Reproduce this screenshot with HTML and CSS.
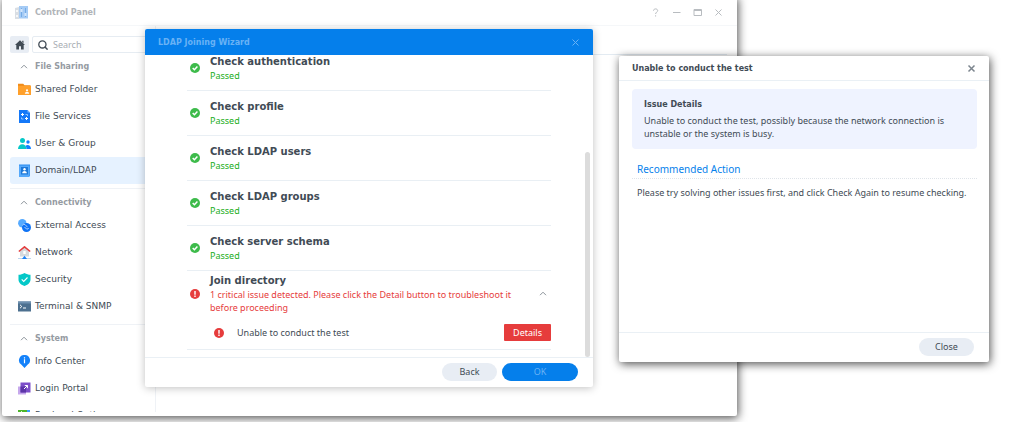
FILE: index.html
```html
<!DOCTYPE html>
<html lang="en">
<head>
    <meta charset="UTF-8">
    <meta name="viewport" content="width=device-width, initial-scale=1.0">
    <title>Control Panel</title>
    <link rel="stylesheet" href="styles.css">
</head>
<body>
    <div class="desktop">
        <section class="window panel">
            <header class="panel-header">
                <svg class="panel-logo" viewBox="0 0 14 14">
                    <path fill="#d9dee4" d="M1 2l4-1v12H1z"/>
                    <path fill="#a5cbf5" d="M5 0h9v12.500H5z"/>
                    <circle cx="3" cy="5" r="1" fill="#fff"/>
                    <circle cx="3" cy="10" r="1" fill="#fff"/>
                    <path stroke="#74abe6" d="M7.500 2v9M11.500 2v9"/>
                    <path fill="#d3e6fb" d="M6.500 3h2v3h-2zM10.500 7h2v3h-2z"/>
                </svg>
                <h1 class="panel-title">Control Panel</h1>
                <div class="panel-tools">
                    <button class="tool" aria-label="Help"><svg viewBox="0 0 9 9"><path d="M2.500 2.700C2.500.300 6.700.300 6.700 2.700 6.700 4 4.600 4.200 4.600 6M4.600 7.300v1.200"/></svg></button>
                    <button class="tool" aria-label="Minimize"><svg viewBox="0 0 9 9"><path d="M1 4.500h7.500"/></svg></button>
                    <button class="tool" aria-label="Maximize"><svg viewBox="0 0 9 9"><path d="M1 1.500h7.500v6H1zM1 2.500h7.500"/></svg></button>
                    <button class="tool" aria-label="Close"><svg viewBox="0 0 9 9"><path d="M1.500 1.500l6 6M7.500 1.500l-6 6"/></svg></button>
                </div>
            </header>
            <div class="panel-body">
                <nav class="sidebar">
                    <div class="search-row">
                        <button class="home" aria-label="Home"><svg viewBox="0 0 10 10"><path fill="#414b55" d="M5 .300L10 5H8.700v4.500H6V6.300H4v3.200H1.300V5H0zM7.200.800h1.300v2.500L7.200 2z"/></svg></button>
                        <label class="search">
                            <svg viewBox="0 0 10 10"><circle cx="4.400" cy="4.400" r="3.600" fill="none" stroke="#414b55" stroke-width="1.300"/><path stroke="#414b55" stroke-width="1.500" d="M7 7l2.600 2.600"/></svg>
                            <input type="text" placeholder="Search" aria-label="Search">
                        </label>
                    </div>
                    <div class="group">
                        <h2 class="group-title"><svg viewBox="0 0 8 5"><path d="M1 4.200l3-3 3 3"/></svg>File Sharing</h2>
                        <a class="item" href="#">
                            <svg viewBox="0 0 13 13"><path fill="#f08c1a" d="M0 .800h5.200l1.300 1.500H12.500V6H0z"/><path fill="#ffa02b" d="M0 2.800h13v9.200H0z"/><circle cx="9" cy="7.300" r="1.100" fill="#fff"/><path fill="#fff" d="M6.800 10.800c0-2.800 4.400-2.800 4.400 0z"/></svg>
                            Shared Folder
                        </a>
                        <a class="item" href="#">
                            <svg viewBox="0 0 13 13"><path fill="#1478f8" d="M1 0h8.500L12 2.500V13H1z"/><path fill="#7db9ff" d="M9.500 0L12 2.500H9.500z"/><path fill="none" stroke="#fff" d="M3 4.500h3M4.500 3v3M7 8.500h3M8.500 7v3"/><path fill="none" stroke="#8cc2ff" d="M7.500 4.500h2v1.500M3.500 7.500v1.500h2"/></svg>
                            File Services
                        </a>
                        <a class="item" href="#">
                            <svg viewBox="0 0 13 13"><circle cx="4.500" cy="3.500" r="2.500" fill="#04c8c8"/><path fill="#04c8c8" d="M0 12C0 5.700 8.500 5.700 8.500 12z"/><circle cx="10" cy="5" r="1.700" fill="#0f80ff"/><path fill="#0f80ff" d="M8.500 12c0-1.300-.4-2.300-1-3.200C9.500 7 13 8.200 13 12z"/></svg>
                            User &amp; Group
                        </a>
                        <a class="item active" href="#">
                            <svg viewBox="0 0 13 13"><path fill="#2a8cf0" d="M1 .500h11V12H1z"/><path fill="#55a9fb" d="M1 1.500h10.500V13H1z"/><path fill="#1d78d8" d="M3 3h7v7.500H3z"/><circle cx="6.500" cy="5.300" r="1.200" fill="#fff"/><path fill="#fff" d="M4.200 9.300c0-3.200 4.600-3.200 4.600 0z"/></svg>
                            Domain/LDAP
                        </a>
                    </div>
                    <div class="group">
                        <h2 class="group-title"><svg viewBox="0 0 8 5"><path d="M1 4.200l3-3 3 3"/></svg>Connectivity</h2>
                        <a class="item" href="#">
                            <svg viewBox="0 0 13 13"><circle cx="4.300" cy="4.200" r="4.200" fill="#55aaff"/><circle cx="8.500" cy="8.500" r="4.500" fill="#0f73f5"/><path fill="none" stroke="#cfe5ff" stroke-width=".8" d="M4.500 6.500l.8-1.300 1.700.3 2.500 2.700M6.500 8l2 2h1.500l.5-1"/></svg>
                            External Access
                        </a>
                        <a class="item" href="#">
                            <svg viewBox="0 0 13 13"><path fill="#d5dade" d="M2 5l4.500-4L11 5v5.500H2z"/><path fill="none" stroke="#e43c3c" stroke-width="1.500" d="M.800 5.500l5.700-4.700 5.700 4.700"/><path fill="#fff" d="M5.300 5h2.400v3H5.300z"/><path stroke="#bcd5ee" d="M0 12.500h13"/><path fill="#1a80f5" d="M6.500 9.800L9 13H4z"/></svg>
                            Network
                        </a>
                        <a class="item" href="#">
                            <svg viewBox="0 0 13 13"><path fill="#04c8c8" d="M6.500 0c2 1.400 4 1.700 6 1.700v4.800c0 3.500-3 5.500-6 6.500-3-1-6-3-6-6.500V1.700c2 0 4-.3 6-1.700z"/><path fill="none" stroke="#fff" stroke-width="1.100" d="M3.700 6.400l2 2 3.800-3.900"/></svg>
                            Security
                        </a>
                        <a class="item" href="#">
                            <svg viewBox="0 0 13 13"><path fill="#4d708f" d="M0 1.500h13v10H0z"/><path fill="#6f91b0" d="M0 1.500h13v2H0z"/><path fill="none" stroke="#fff" d="M2 4.800l1.800 1.700L2 8.200M5 8h3"/></svg>
                            Terminal &amp; SNMP
                        </a>
                    </div>
                    <div class="group">
                        <h2 class="group-title"><svg viewBox="0 0 8 5"><path d="M1 4.200l3-3 3 3"/></svg>System</h2>
                        <a class="item" href="#">
                            <svg viewBox="0 0 13 13"><path fill="#1482fa" d="M6.500 0a5.300 5.300 0 0 1 3 9.800L6.500 13l-3-3.200a5.300 5.300 0 0 1 3-9.800z"/><path fill="#fff" d="M5.900 2.300h1.200v1.200H5.900zM5.900 4.300h1.200v4H5.900z"/></svg>
                            Info Center
                        </a>
                        <a class="item" href="#">
                            <svg viewBox="0 0 13 13"><path fill="#c6a8ec" d="M0 4.500h8v8H0z"/><path fill="#7d4fc9" d="M2.500.500h10v10h-10z"/><path fill="#5c35a8" d="M2.500 4.500H8v6H2.500z"/><path fill="none" stroke="#fff" d="M6 7l3.500-3.500M6.800 3.500h2.700v2.700"/></svg>
                            Login Portal
                        </a>
                        <a class="item" href="#">
                            <svg viewBox="0 0 13 13"><path fill="#4db52a" d="M0 1h12v11H0z"/><path fill="#3aa0ff" d="M9 1h3v4H9z"/><path fill="none" stroke="#d8f0c8" d="M3 2l3 3 2-2"/></svg>
                            Regional Options
                        </a>
                    </div>
                </nav>
                <main class="content"></main>
            </div>
        </section>

        <section class="window wizard">
            <header class="wizard-header">
                <h2 class="wizard-title">LDAP Joining Wizard</h2>
                <button class="tool" aria-label="Close"><svg viewBox="0 0 9 9"><path d="M1.500 1.500l6 6M7.500 1.500l-6 6"/></svg></button>
            </header>
            <div class="wizard-body">
                <ul class="checks">
                    <li class="check">
                        <svg class="status" viewBox="0 0 10 10"><circle cx="5" cy="5" r="5" fill="#3dbb4b"/><path fill="none" stroke="#fff" stroke-width="1.500" d="M2.700 5l1.700 1.700 3-3.200"/></svg>
                        <div class="check-text"><h3>Check authentication</h3><p class="passed">Passed</p></div>
                    </li>
                    <li class="check">
                        <svg class="status" viewBox="0 0 10 10"><circle cx="5" cy="5" r="5" fill="#3dbb4b"/><path fill="none" stroke="#fff" stroke-width="1.500" d="M2.700 5l1.700 1.700 3-3.200"/></svg>
                        <div class="check-text"><h3>Check profile</h3><p class="passed">Passed</p></div>
                    </li>
                    <li class="check">
                        <svg class="status" viewBox="0 0 10 10"><circle cx="5" cy="5" r="5" fill="#3dbb4b"/><path fill="none" stroke="#fff" stroke-width="1.500" d="M2.700 5l1.700 1.700 3-3.200"/></svg>
                        <div class="check-text"><h3>Check LDAP users</h3><p class="passed">Passed</p></div>
                    </li>
                    <li class="check">
                        <svg class="status" viewBox="0 0 10 10"><circle cx="5" cy="5" r="5" fill="#3dbb4b"/><path fill="none" stroke="#fff" stroke-width="1.500" d="M2.700 5l1.700 1.700 3-3.200"/></svg>
                        <div class="check-text"><h3>Check LDAP groups</h3><p class="passed">Passed</p></div>
                    </li>
                    <li class="check">
                        <svg class="status" viewBox="0 0 10 10"><circle cx="5" cy="5" r="5" fill="#3dbb4b"/><path fill="none" stroke="#fff" stroke-width="1.500" d="M2.700 5l1.700 1.700 3-3.200"/></svg>
                        <div class="check-text"><h3>Check server schema</h3><p class="passed">Passed</p></div>
                    </li>
                    <li class="check-failed">
                        <div class="check">
                            <svg class="status" viewBox="0 0 10 10"><circle cx="5" cy="5" r="5" fill="#e63c3c"/><path fill="#fff" d="M4.300 2h1.400v3.800H4.300zM4.300 6.600h1.400V8H4.300z"/></svg>
                            <div class="check-text">
                                <h3>Join directory</h3>
                                <p class="critical">1 critical issue detected. Please click the Detail button to troubleshoot it before proceeding</p>
                            </div>
                            <button class="collapse" aria-label="Collapse"><svg viewBox="0 0 8 5"><path d="M1 4.200l3-3 3 3"/></svg></button>
                        </div>
                        <div class="issue">
                            <svg class="status" viewBox="0 0 10 10"><circle cx="5" cy="5" r="5" fill="#e63c3c"/><path fill="#fff" d="M4.300 2h1.400v3.800H4.300zM4.300 6.600h1.400V8H4.300z"/></svg>
                            <span>Unable to conduct the test</span>
                            <button class="btn-details">Details</button>
                        </div>
                    </li>
                </ul>
                <div class="scrollbar"></div>
            </div>
            <footer class="wizard-footer">
                <button class="btn">Back</button>
                <button class="btn btn-primary">OK</button>
            </footer>
        </section>

        <section class="window details">
            <header class="details-header">
                <h2 class="details-title">Unable to conduct the test</h2>
                <button class="tool" aria-label="Close"><svg viewBox="0 0 9 9"><path d="M1.500 1.500l6 6M7.500 1.500l-6 6"/></svg></button>
            </header>
            <div class="details-body">
                <div class="notice">
                    <h3>Issue Details</h3>
                    <p>Unable to conduct the test, possibly because the network connection is unstable or the system is busy.</p>
                </div>
                <h3 class="action-title">Recommended Action</h3>
                <p class="action-text">Please try solving other issues first, and click Check Again to resume checking.</p>
            </div>
            <footer class="details-footer">
                <button class="btn">Close</button>
            </footer>
        </section>
    </div>
</body>
</html>
```

FILE: styles.css
```css
* {
    box-sizing: border-box;
    margin: 0;
    padding: 0;
}
body {
    font-family: "Noto Sans", sans-serif;
    font-size: 9px;
    line-height: 13px;
    color: #414b55;
    background-color: #fff;
}
h1, h2, h3 {
    font-family: "DejaVu Sans", Verdana, sans-serif;
    font-size: 8px;
    line-height: 12px;
}
button {
    border: none;
    background: none;
    font-family: inherit;
    font-size: inherit;
    color: inherit;
    cursor: pointer;
}
svg {
    display: block;
    flex: none;
}
.desktop {
    position: relative;
    height: 100vh;
    overflow: hidden;
}

/* Windows */
.window {
    position: absolute;
    display: flex;
    flex-direction: column;
    background-color: #fff;
    border-radius: 2px;
}
.panel {
    top: -4px;
    bottom: 6px;
    left: 2px;
    right: 287px;
    padding-top: 4px;
    box-shadow: 1px 2px 10px rgba(0, 0, 0, 0.7);
}
.wizard {
    top: 29px;
    bottom: 35px;
    left: 145px;
    right: 431px;
    box-shadow: 0 1px 8px rgba(0, 0, 0, 0.25);
}
.details {
    top: 56px;
    bottom: 60px;
    left: 619px;
    right: 35px;
    box-shadow: 1px 2px 10px rgba(0, 0, 0, 0.7);
}
.tool {
    width: 9px;
    height: 9px;
}
.tool path {
    fill: none;
    stroke: currentColor;
}

/* Control panel */
.panel-header {
    display: flex;
    align-items: center;
    height: 26px;
    padding: 0 14px 0 12px;
    border-bottom: 1px solid #f5f7f9;
}
.panel-logo {
    width: 14px;
    height: 14px;
}
.panel-title {
    flex: 1;
    margin-left: 7px;
    color: #b0b4b8;
}
.panel-tools {
    display: flex;
    gap: 12px;
    color: #b8bcc0;
}
.panel-body {
    display: flex;
    flex: 1;
    min-height: 0;
}
.sidebar {
    width: 154px;
    margin-bottom: 4px;
    padding: 10px 0 0 8px;
    border-right: 1px solid #eff2f6;
    overflow: hidden;
}
.content {
    flex: 1;
    margin: 28px 10px 0 0;
    border-top: 1px solid #e3ebf2;
}
.search-row {
    display: flex;
    gap: 3px;
    height: 17px;
}
.home {
    display: flex;
    align-items: center;
    justify-content: center;
    width: 19px;
    border-radius: 2px;
    background-color: #e8edf4;
}
.home svg,
.search svg {
    width: 10px;
    height: 10px;
}
.search {
    display: flex;
    flex: 1;
    align-items: center;
    gap: 5px;
    padding-left: 5px;
    border: 1px solid #e6ecf2;
    border-radius: 2px;
}
.search input {
    width: 100%;
    border: none;
    outline: none;
    font-family: inherit;
    font-size: 9px;
}
.search input::placeholder {
    color: #a8adb3;
}
.group {
    padding: 3px 0 4px;
    border-bottom: 1px solid #eff2f6;
}
.group-title {
    display: flex;
    align-items: center;
    gap: 7px;
    height: 20px;
    padding: 1px 0 0 10px;
    color: #959ba2;
}
.group-title svg,
.collapse svg {
    width: 8px;
    height: 5px;
}
.group-title path,
.collapse path {
    fill: none;
    stroke: #8c939a;
}
.item {
    display: flex;
    align-items: center;
    gap: 4px;
    height: 27px;
    padding-left: 8px;
    border-radius: 3px;
    font-family: "DejaVu Sans", Verdana, sans-serif;
    color: #414b55;
    text-decoration: none;
    white-space: nowrap;
}
.item svg {
    width: 13px;
    height: 13px;
}
.item.active {
    background-color: #e6f2ff;
}

/* Wizard */
.wizard-header {
    display: flex;
    align-items: center;
    justify-content: space-between;
    height: 26px;
    padding: 0 13px;
    border-radius: 2px 2px 0 0;
    background-color: #057feb;
    color: #69b2f5;
}
.wizard-title,
.details-title {
    padding-top: 2px;
}
.wizard-body {
    position: relative;
    display: flex;
    flex: 1;
    flex-direction: column;
    justify-content: flex-end;
    min-height: 0;
    padding: 0 42px 7px;
    overflow: hidden;
}
.checks {
    list-style: none;
}
.check {
    display: flex;
    align-items: center;
    min-height: 45px;
    padding-left: 3px;
}
.checks > li {
    border-bottom: 1px solid #e9eff4;
}
.status {
    width: 10px;
    height: 10px;
}
.check-text {
    flex: 1;
    margin-left: 10px;
}
.check-text h3 {
    font-size: 10px;
    line-height: 15px;
}
.passed {
    color: #1aad1a;
}
.critical {
    padding-right: 12px;
    color: #e63c3c;
}
.collapse {
    padding: 4px;
}
.issue {
    display: flex;
    align-items: center;
    gap: 13px;
    height: 33px;
    padding-left: 27px;
}
.btn-details {
    height: 17px;
    margin-left: auto;
    padding: 0 9px;
    border-radius: 1px;
    background-color: #e63c3c;
    color: #fff;
}
.scrollbar {
    position: absolute;
    top: 97px;
    right: 3px;
    bottom: 0;
    width: 5px;
    border-radius: 3px;
    background-color: #dcdcdc;
}
.wizard-footer,
.details-footer {
    display: flex;
    align-items: center;
    justify-content: flex-end;
    gap: 5px;
    height: 30px;
    padding: 0 15px 2px;
    border-top: 1px solid #eaf0f5;
}
.btn {
    min-width: 55px;
    height: 18px;
    border-radius: 9px;
    background-color: #e8edf4;
}
.btn-primary {
    min-width: 76px;
    background-color: #057feb;
    color: #69b2f5;
}

/* Issue details */
.details-header {
    display: flex;
    align-items: center;
    justify-content: space-between;
    height: 25px;
    padding: 0 13px;
    border-bottom: 1px solid #eaf0f5;
}
.details-header path {
    stroke: #7c858e;
    stroke-width: 1.5;
}
.details-body {
    flex: 1;
    padding: 8px 12px 8px 13px;
}
.notice {
    padding: 10px 12px 9px;
    border-radius: 4px;
    background-color: #eff3ff;
}
.notice h3 {
    margin-bottom: 3px;
}
.action-title {
    margin-top: 13px;
    padding: 0 5px 2px;
    border-bottom: 1px dotted #dfe4e9;
    font-family: inherit;
    font-size: 10px;
    font-weight: normal;
    line-height: 14px;
    color: #057feb;
}
.action-text {
    padding: 7px 5px;
}
```
